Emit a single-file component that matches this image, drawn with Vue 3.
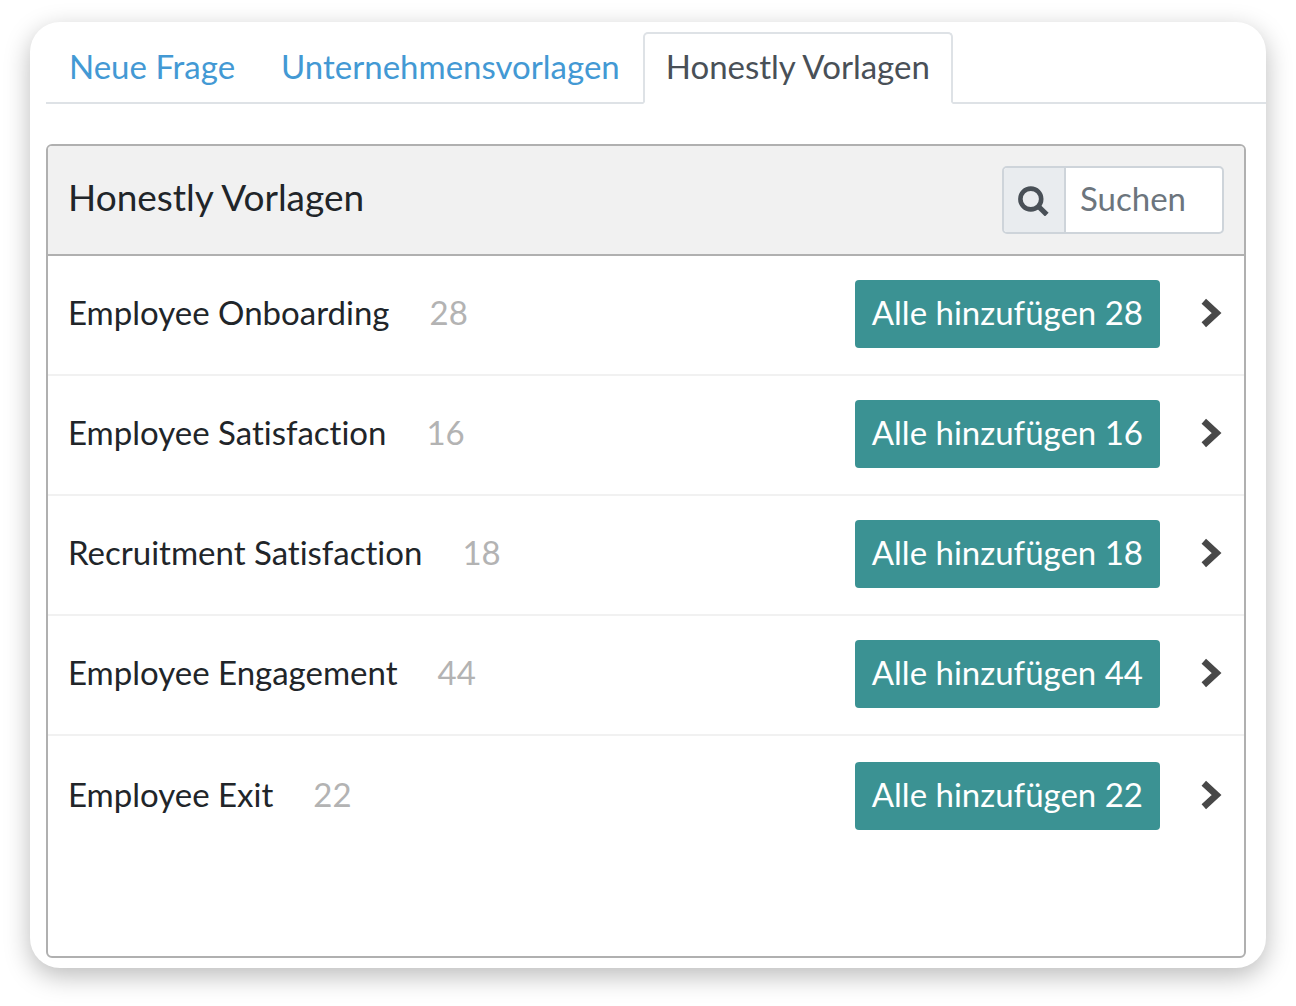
<script setup>
import { ref } from 'vue'

const tabs = ['Neue Frage', 'Unternehmensvorlagen', 'Honestly Vorlagen']
const active = ref(2)
const query = ref('')
const templates = [
  { name: 'Employee Onboarding', count: 28 },
  { name: 'Employee Satisfaction', count: 16 },
  { name: 'Recruitment Satisfaction', count: 18 },
  { name: 'Employee Engagement', count: 44 },
  { name: 'Employee Exit', count: 22 },
]
</script>

<template>
  <main class="card">
    <nav class="tabs">
      <a
        v-for="(tab, i) in tabs"
        :key="tab"
        href="#"
        class="tab"
        :class="{ active: i === active }"
        @click.prevent="active = i"
      >{{ tab }}</a>
    </nav>

    <section class="panel">
      <header class="panel-head">
        <h1 class="title">Honestly Vorlagen</h1>
        <div class="search">
          <label class="search-icon" for="search" aria-label="Suchen">
            <svg width="32" height="32" viewBox="0 0 32 32" fill="none" stroke="#495057">
              <circle cx="12.8" cy="15" r="10.4" stroke-width="4.6" />
              <path d="M20 22L28.8 30.6" stroke-width="5.2" />
            </svg>
          </label>
          <input id="search" v-model="query" class="search-input" type="text" placeholder="Suchen" />
        </div>
      </header>

      <ul class="list">
        <li v-for="item in templates" :key="item.name" class="row">
          <span class="name">{{ item.name }}</span>
          <span class="count">{{ item.count }}</span>
          <button class="add" type="button">Alle hinzufügen {{ item.count }}</button>
          <button class="open" type="button" :aria-label="item.name">
            <svg width="24" height="32" viewBox="0 0 24 32" fill="none" stroke="#484848" stroke-width="6.6">
              <path d="M3.8 3.2L16.6 15L3.8 26.8" />
            </svg>
          </button>
        </li>
      </ul>
    </section>
  </main>
</template>

<style>
body {
  margin: 0;
  background: #fff;
}
</style>

<style scoped>
.card {
  box-sizing: border-box;
  margin: 22px 30px 38px;
  padding: 10px 0 10px 16px;
  border-radius: 30px;
  background: #fff;
  box-shadow: 0 8px 26px rgba(0, 0, 0, 0.27);
  font-family: Lato, "Open Sans", sans-serif;
  font-size: 33px;
  line-height: 48px;
  font-variant-ligatures: none;
  color: #212529;
}

.tabs {
  display: flex;
  border-bottom: 2px solid #dee2e6;
}

.tab {
  margin-bottom: -2px;
  padding: 8px 21px 12px;
  border: 2px solid transparent;
  border-radius: 5px 5px 0 0;
  color: #4399d4;
  text-decoration: none;
}

.tab.active {
  border-color: #dee2e6 #dee2e6 #fff;
  background: #fff;
  color: #495057;
}

.panel {
  min-height: 810px;
  margin: 40px 20px 0 0;
  border: 2px solid #b0b0b0;
  border-radius: 6px;
  overflow: hidden;
}

.panel-head {
  display: flex;
  align-items: center;
  justify-content: space-between;
  padding: 20px;
  border-bottom: 2px solid #b0b0b0;
  background: #f1f1f1;
}

.title {
  margin: 0;
  padding-bottom: 6px;
  font-size: 37px;
  font-weight: 400;
}

.search {
  display: flex;
  box-sizing: border-box;
  width: 222px;
  height: 68px;
  border: 2px solid #ced4da;
  border-radius: 5px;
  background: #fff;
  overflow: hidden;
}

.search-icon {
  display: flex;
  flex: none;
  align-items: center;
  justify-content: center;
  width: 60px;
  border-right: 2px solid #ced4da;
  background: #e9ecef;
}

.search-input {
  flex: 1;
  min-width: 0;
  padding: 0 14px 4px;
  border: 0;
  outline: 0;
  background: none;
  font: inherit;
  color: #495057;
}

.search-input::placeholder {
  color: #6c757d;
  opacity: 1;
}

.list {
  margin: 0;
  padding: 0;
  list-style: none;
}

.row {
  display: flex;
  align-items: center;
  padding: 24px 20px 26px;
  border-bottom: 2px solid #f1f1f1;
}

.row:last-child {
  padding-top: 26px;
  border-bottom: 0;
}

.name,
.count {
  padding-bottom: 4px;
}

.count {
  margin-left: 40px;
  color: #b3b3b3;
}

.add {
  margin-left: auto;
  padding: 8px 17px 12px;
  border: 0;
  border-radius: 4px;
  background: #3b9293;
  font: inherit;
  color: #fff;
}

.open {
  display: flex;
  margin-left: 40px;
  padding: 0;
  border: 0;
  background: none;
}
</style>
